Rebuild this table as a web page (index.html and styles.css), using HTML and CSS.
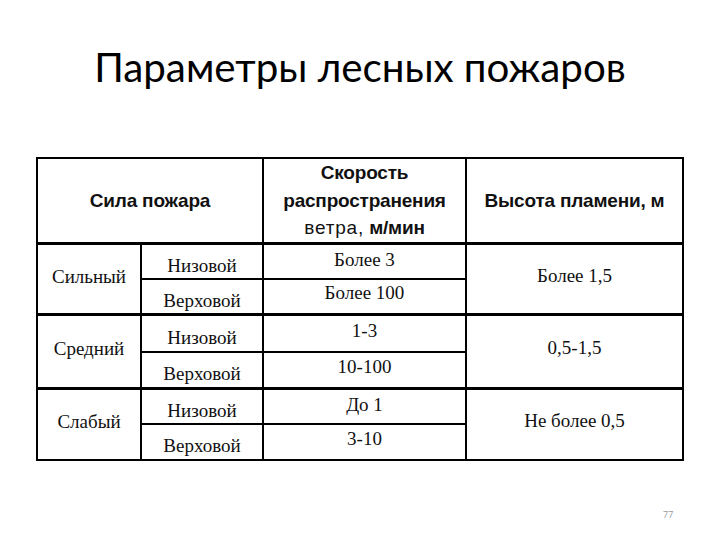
FILE: index.html
```html
<!DOCTYPE html>
<html lang="ru">
<head>
<meta charset="utf-8">
<link rel="stylesheet" href="styles.css">
</head>
<body>
<div class="slide">
  <h1 class="title">Параметры лесных пожаров</h1>
  <table class="fires">
    <colgroup>
      <col class="c1"><col class="c2"><col class="c3"><col class="c4">
    </colgroup>
    <tr class="head">
      <th colspan="2">Сила пожара</th>
      <th>Скорость<br>распространения<br><span class="reg">ветра,</span> м/мин</th>
      <th>Высота пламени, м</th>
    </tr>
    <tr class="sub top r1a">
      <td rowspan="2" class="kind">Сильный</td>
      <td class="low">Низовой</td>
      <td class="hi">Более 3</td>
      <td rowspan="2" class="up">Более 1,5</td>
    </tr>
    <tr class="sub r1b">
      <td class="low">Верховой</td>
      <td class="up">Более 100</td>
    </tr>
    <tr class="sub top r2a">
      <td rowspan="2" class="kind">Средний</td>
      <td class="low">Низовой</td>
      <td class="hi">1-3</td>
      <td rowspan="2" class="up">0,5-1,5</td>
    </tr>
    <tr class="sub r2b">
      <td class="low">Верховой</td>
      <td class="up">10-100</td>
    </tr>
    <tr class="sub top r3a">
      <td rowspan="2" class="kind">Слабый</td>
      <td class="low">Низовой</td>
      <td class="hi">До 1</td>
      <td rowspan="2" class="up">Не более 0,5</td>
    </tr>
    <tr class="sub r3b">
      <td class="low">Верховой</td>
      <td class="up">3-10</td>
    </tr>
  </table>
  <div class="num">77</div>
</div>
</body>
</html>
```

FILE: styles.css
```css
html, body {
  margin: 0;
  padding: 0;
  background: #fff;
}
.slide {
  width: 720px;
  height: 540px;
  position: relative;
  overflow: hidden;
}
.title {
  margin: 0;
  padding-top: 41px;
  height: 113px;
  box-sizing: border-box;
  text-align: center;
  font-family: Lato, "Open Sans", sans-serif;
  font-weight: 400;
  font-size: 40.3px;
  line-height: 52px;
  color: #000;
}
.fires {
  margin-left: 36px;
  margin-top: 44px;
  border-collapse: collapse;
  width: 646px;
  table-layout: fixed;
}
.c1 { width: 104px; }
.c2 { width: 122px; }
.c3 { width: 203px; }
.c4 { width: 217px; }
.fires th, .fires td {
  border: 2px solid #000;
  padding: 0;
  text-align: center;
  color: #111;
}
.fires th {
  font-family: "Liberation Sans", Arial, sans-serif;
  font-weight: 700;
  font-size: 19px;
  letter-spacing: -0.2px;
  line-height: 27.5px;
  height: 81px;
}
.fires th .reg {
  font-weight: 400;
  letter-spacing: 0.8px;
}
.fires td {
  font-family: "Liberation Serif", "Times New Roman", serif;
  font-size: 19px;
  line-height: 20px;
}
.fires tr.top td {
  border-top-width: 3px;
}
.r1a td { height: 24px; }
.r1b td { height: 24px; }
.r2a td { height: 26px; }
.r2b td { height: 25px; }
.r3a td { height: 24px; }
.r3b td { height: 25px; }
.fires td.hi {
  vertical-align: top;
  padding-top: 5px;
}
.fires td.low {
  padding-top: 9px;
}
.fires td.up {
  padding-bottom: 6px;
}
.fires td.kind {
  padding-bottom: 4px;
}
.num {
  position: absolute;
  left: 663px;
  top: 508px;
  font-family: "Open Sans", sans-serif;
  font-size: 9px;
  color: #999;
}
```
